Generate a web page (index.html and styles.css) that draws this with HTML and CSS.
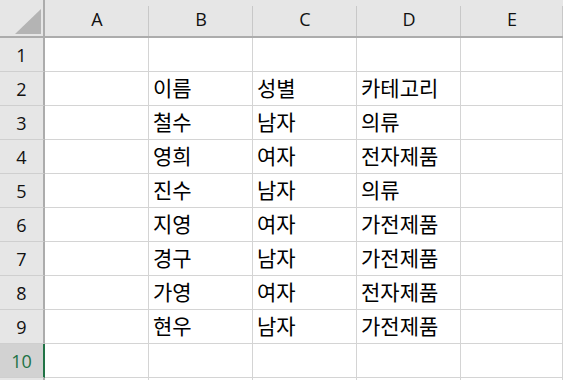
FILE: index.html
```html
<!DOCTYPE html>
<html lang="ko">
<head>
<meta charset="utf-8">
<link rel="stylesheet" href="styles.css">
</head>
<body>
<div class="sheet">
  <div class="corner"><svg width="44" height="36" viewBox="0 0 44 36"><polygon points="15,34 41,34 41,9" fill="#b4b4b4"/></svg></div>
  <div class="colh">A</div><div class="colh">B</div><div class="colh">C</div><div class="colh">D</div><div class="colh last">E</div>

  <div class="rowh">1</div><div class="cell"></div><div class="cell"></div><div class="cell"></div><div class="cell"></div><div class="cell"></div>
  <div class="rowh">2</div><div class="cell"></div><div class="cell">이름</div><div class="cell">성별</div><div class="cell">카테고리</div><div class="cell"></div>
  <div class="rowh">3</div><div class="cell"></div><div class="cell">철수</div><div class="cell">남자</div><div class="cell">의류</div><div class="cell"></div>
  <div class="rowh">4</div><div class="cell"></div><div class="cell">영희</div><div class="cell">여자</div><div class="cell">전자제품</div><div class="cell"></div>
  <div class="rowh">5</div><div class="cell"></div><div class="cell">진수</div><div class="cell">남자</div><div class="cell">의류</div><div class="cell"></div>
  <div class="rowh">6</div><div class="cell"></div><div class="cell">지영</div><div class="cell">여자</div><div class="cell">가전제품</div><div class="cell"></div>
  <div class="rowh">7</div><div class="cell"></div><div class="cell">경구</div><div class="cell">남자</div><div class="cell">가전제품</div><div class="cell"></div>
  <div class="rowh">8</div><div class="cell"></div><div class="cell">가영</div><div class="cell">여자</div><div class="cell">전자제품</div><div class="cell"></div>
  <div class="rowh">9</div><div class="cell"></div><div class="cell">현우</div><div class="cell">남자</div><div class="cell">가전제품</div><div class="cell"></div>
  <div class="rowh sel">10</div><div class="cell"></div><div class="cell"></div><div class="cell"></div><div class="cell"></div><div class="cell"></div>
  <div class="rowh"></div><div class="cell"></div><div class="cell"></div><div class="cell"></div><div class="cell"></div><div class="cell"></div>
</div>
</body>
</html>
```

FILE: styles.css
```css
html, body {
  margin: 0;
  padding: 0;
  background: #ffffff;
  overflow: hidden;
}
.sheet {
  display: grid;
  grid-template-columns: 45px 104px 104px 104px 104px 1fr;
  grid-template-rows: 38px repeat(11, 34px);
  width: 563px;
  height: 380px;
  overflow: hidden;
  font-family: "Noto Sans CJK KR", "Noto Sans", sans-serif;
}
.corner {
  background: #e6e6e6;
  border-right: 2px solid #acacac;
  border-bottom: 2px solid #acacac;
  box-sizing: border-box;
  line-height: 0;
}
.colh {
  background: linear-gradient(#c8c8c8, #c8c8c8) right bottom / 1px calc(100% - 6px) no-repeat, #e6e6e6;
  border-bottom: 2px solid #acacac;
  box-sizing: border-box;
  display: flex;
  align-items: center;
  justify-content: center;
  font-family: "Open Sans", "Noto Sans", sans-serif;
  font-size: 18px;
  color: #111;
  padding-top: 2px;
}
.rowh {
  background: #e6e6e6;
  border-right: 2px solid #acacac;
  border-bottom: 1px solid #cfcfcf;
  box-sizing: border-box;
  display: flex;
  align-items: center;
  justify-content: center;
  font-family: "Open Sans", "Noto Sans", sans-serif;
  font-size: 18px;
  color: #111;
}
.rowh.sel {
  background: #d2d2d2;
  color: #217346;
  border-right-color: #217346;
}
.cell {
  border-right: 1px solid #d4d4d4;
  border-bottom: 1px solid #d4d4d4;
  box-sizing: border-box;
  display: flex;
  align-items: center;
  padding: 0 0 3px 4px;
  font-size: 21px;
  color: #000;
  white-space: nowrap;
}
```
